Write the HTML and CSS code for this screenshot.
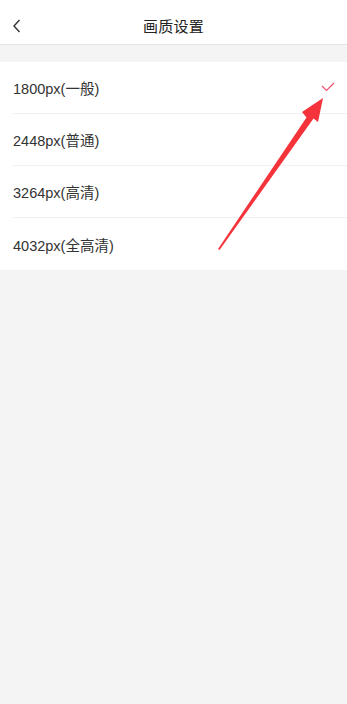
FILE: index.html
```html
<!DOCTYPE html>
<html lang="zh-CN">
<head>
  <meta charset="UTF-8" />
  <meta name="viewport" content="width=device-width, initial-scale=1.0" />
  <title>画质设置</title>
  <link rel="stylesheet" href="styles.css">
</head>
<body>
  <header class="nav-bar">
    <a href="#" class="back-button">
      <svg width="10" height="14" viewBox="0 0 10 14"><path d="M7.5 1 L2 7 L7.5 13" fill="none" stroke="#333" stroke-width="1.4"/></svg>
    </a>
    <h1>画质设置</h1>
  </header>

  <ul class="option-list">
    <li class="option selected">
      <span>1800px(一般)</span>
      <svg class="check" width="14" height="10" viewBox="0 0 14 10"><path d="M1 4 L5.5 8.5 L13 1" fill="none" stroke="#e9546b" stroke-width="1.2"/></svg>
    </li>
    <li class="option"><span>2448px(普通)</span></li>
    <li class="option"><span>3264px(高清)</span></li>
    <li class="option"><span>4032px(全高清)</span></li>
  </ul>

  <!-- annotation arrow drawn over the list -->
  <svg class="annotation" width="347" height="270" viewBox="0 0 347 270">
    <polygon points="218,249 306.5,117.5 302,112 323,98 318,122 313.5,118.5 219.5,250" fill="#f5333a"/>
  </svg>
</body>
</html>
```

FILE: styles.css
```css
body {
  margin: 0;
  font-family: "Liberation Sans", "Noto Sans CJK SC", sans-serif;
  background: #f4f4f4;
  color: #333;
  position: relative;
  min-height: 704px;
}

.nav-bar {
  height: 44px;
  background: #fff;
  border-bottom: 1px solid #e3e3e3;
  display: flex;
  align-items: center;
  justify-content: center;
  position: relative;
}

.back-button {
  position: absolute;
  left: 12px;
  top: 19px;
  display: flex;
}

.nav-bar h1 {
  margin: 0;
  font-size: 15px;
  font-weight: normal;
  color: #222;
  letter-spacing: 0.3px;
  padding-top: 7px;
}

.option-list {
  list-style: none;
  margin: 17px 0 0;
  padding: 0 0 0 13px;
  background: #fff;
}

.option {
  height: 51px;
  display: flex;
  align-items: center;
  justify-content: space-between;
  padding-right: 12px;
  font-size: 14.5px;
  border-bottom: 1px solid #f1f1f1;
}

.option:last-child {
  border-bottom: none;
  height: 52px;
}

.option .check {
  margin-top: -1px;
}

.annotation {
  position: absolute;
  left: 0;
  top: 0;
  pointer-events: none;
}
```
